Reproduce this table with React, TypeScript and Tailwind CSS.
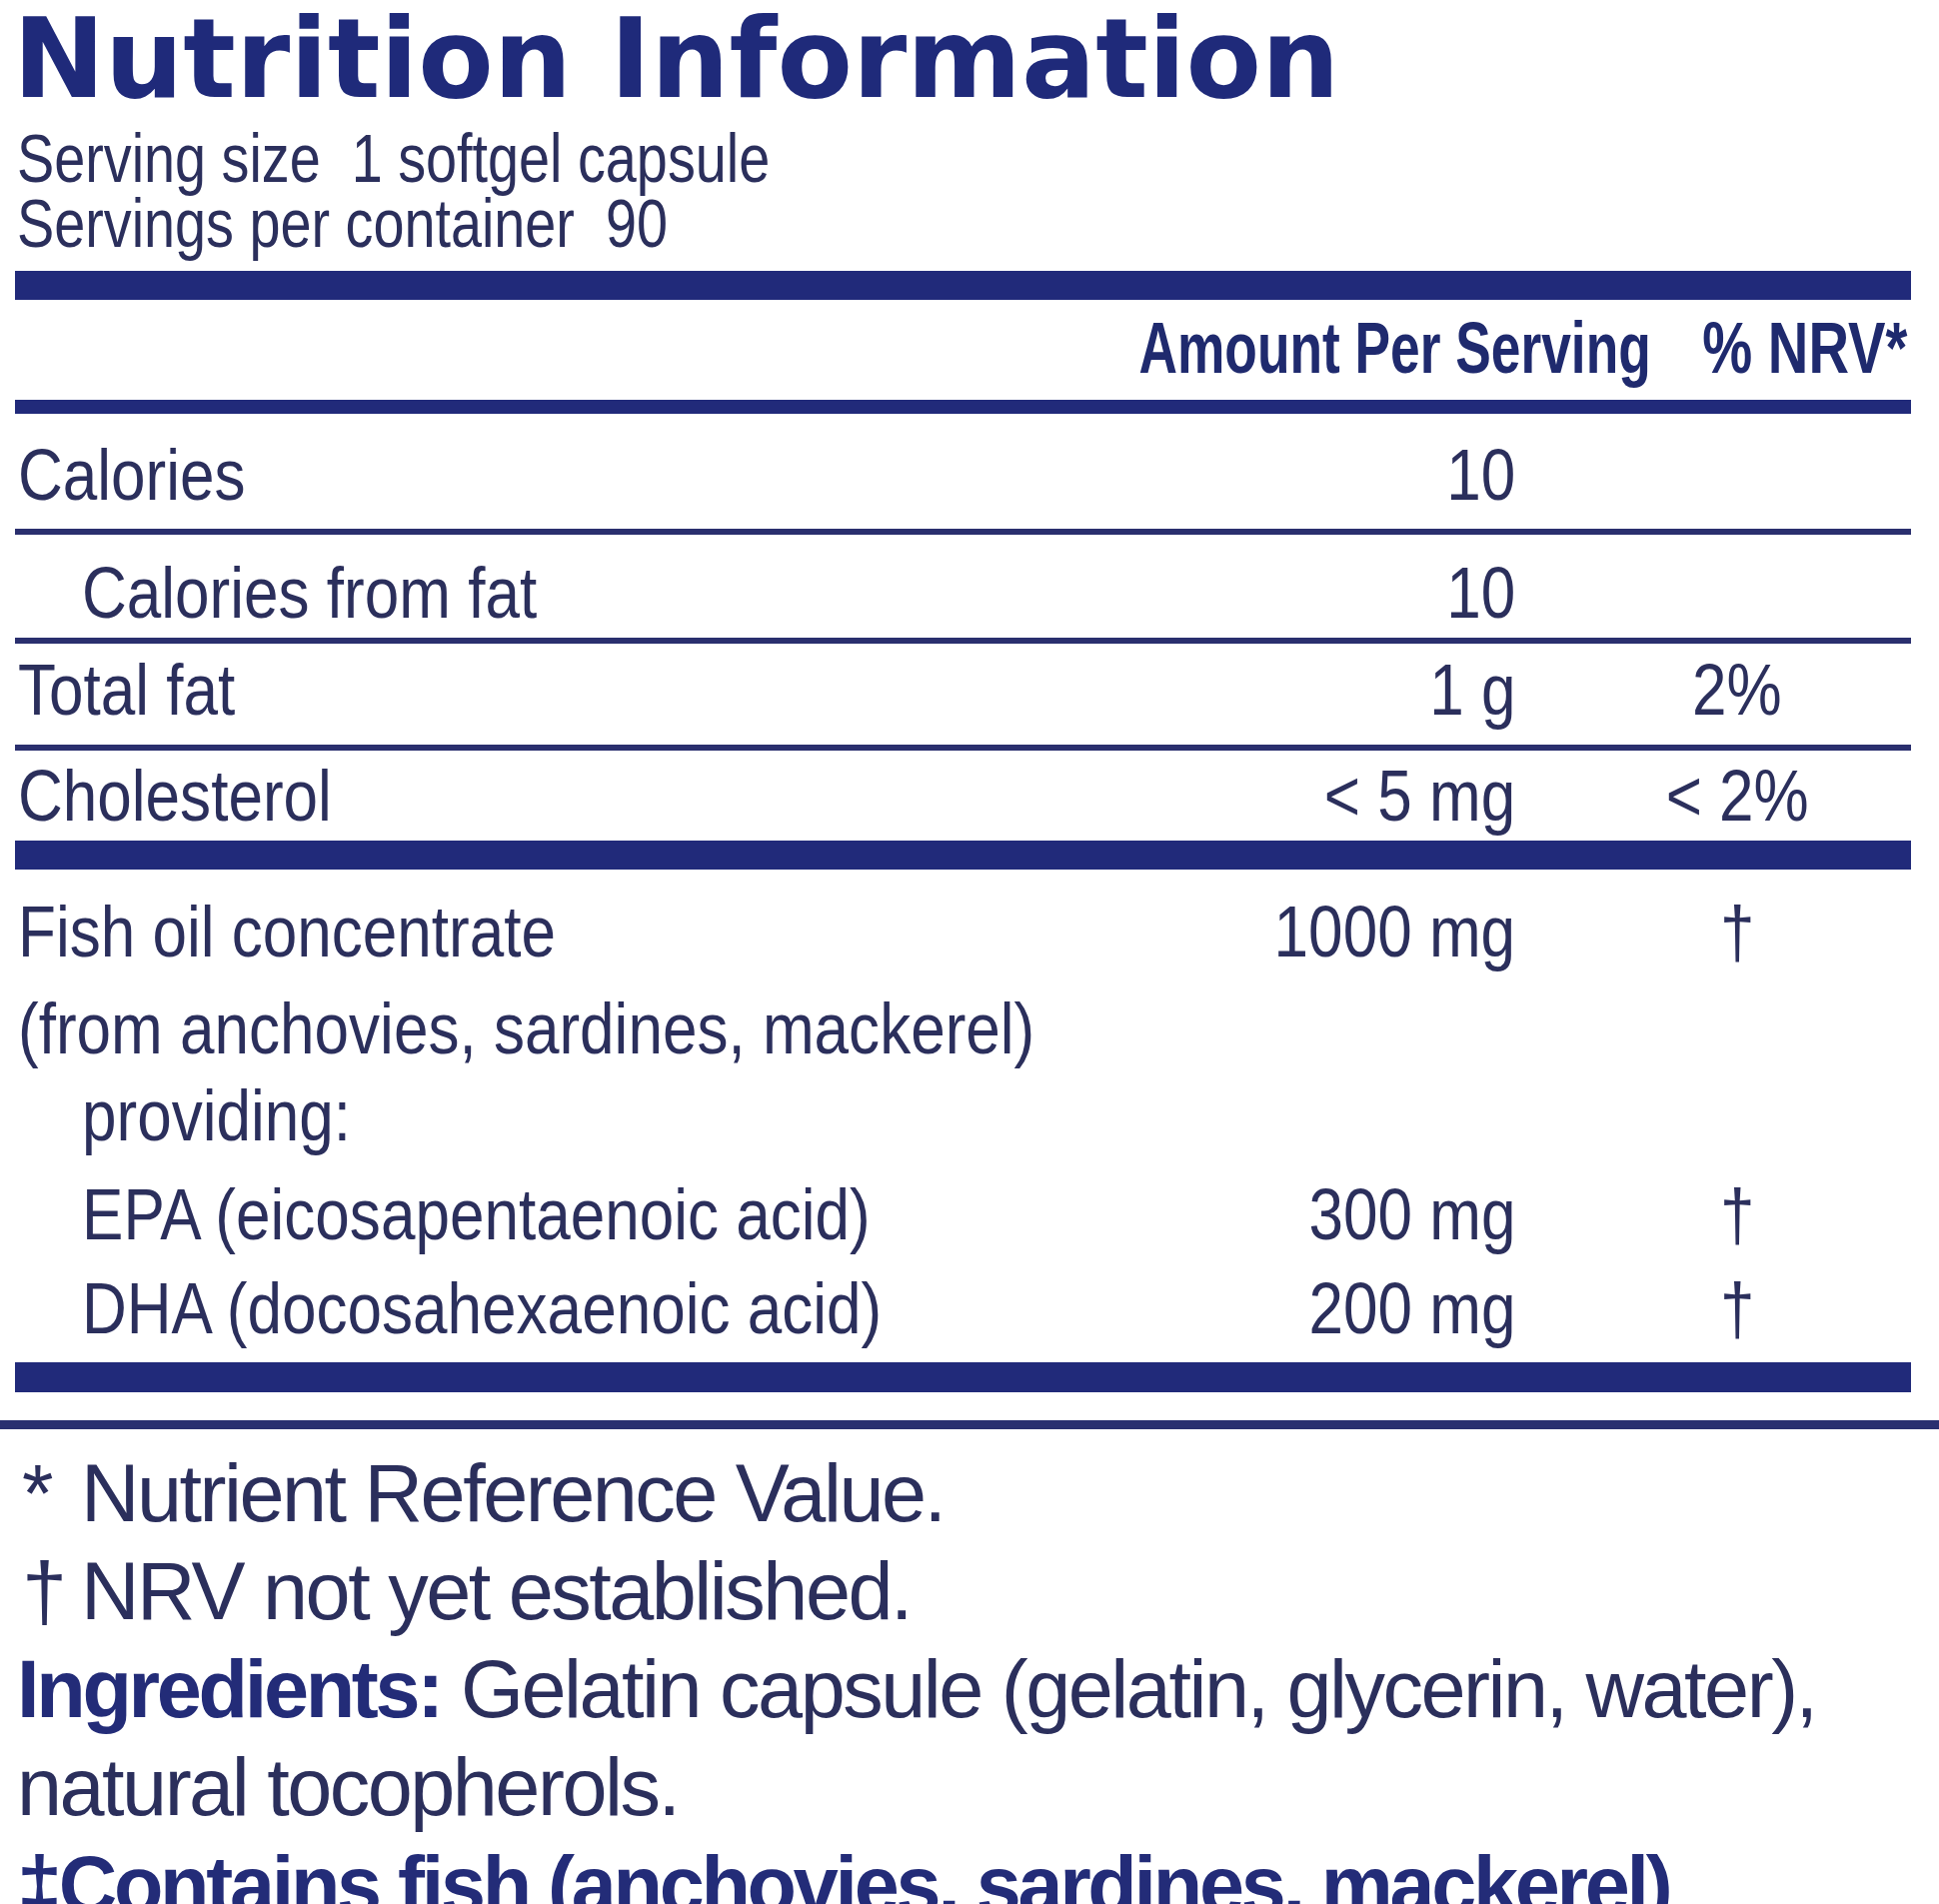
const bar = "bg-[#212a7a]"

const rows = [
  { label: "Calories", amount: "10", nrv: "", indent: false, box: "h-[115px] pt-[24px]" },
  { label: "Calories from fat", amount: "10", nrv: "", indent: true, box: "h-[103px] pt-[21px]" },
  { label: "Total fat", amount: "1 g", nrv: "2%", indent: false, box: "h-[101px] pt-[9px]" },
  { label: "Cholesterol", amount: "< 5 mg", nrv: "< 2%", indent: false, box: "h-[90px] pt-[8px]" },
]

const fishRows = [
  { label: "Fish oil concentrate", amount: "1000 mg", nrv: "†", indent: false, box: "h-[97px]" },
  { label: "(from anchovies, sardines, mackerel)", amount: "", nrv: "", indent: false, box: "h-[87px]" },
  { label: "providing:", amount: "", nrv: "", indent: true, box: "h-[99px]" },
  { label: "EPA (eicosapentaenoic acid)", amount: "300 mg", nrv: "†", indent: true, box: "h-[94px]" },
  { label: "DHA (docosahexaenoic acid)", amount: "200 mg", nrv: "†", indent: true, box: "h-[91px]" },
]

function Row({ label, amount, nrv, indent, box }: { label: string; amount: string; nrv: string; indent: boolean; box: string }) {
  return (
    <div className={`flex items-start leading-[74px] ${box}`}>
      <div className={`flex-1 min-w-0 whitespace-nowrap ${indent ? "pl-[67px]" : "pl-[3px]"}`}>
        <span className="inline-block origin-left scale-x-[0.85]">{label}</span>
      </div>
      <div className="w-[400px] text-right whitespace-nowrap">
        <span className="inline-block origin-right scale-x-[0.85]">{amount}</span>
      </div>
      <div className="ml-[72px] mr-[24px] w-[300px] text-center whitespace-nowrap">
        <span className="inline-block scale-x-[0.85]">{nrv}</span>
      </div>
    </div>
  )
}

export default function App() {
  return (
    <div className="min-h-screen bg-white text-[#2b2f5c] overflow-hidden">
      <div className="pl-[15px] w-[1912px]">
        <h1 className="pt-[3px] -ml-[2px] font-['DejaVu_Sans',sans-serif] font-bold text-[110px] leading-[112px] text-[#1f2a7a] whitespace-nowrap">
          Nutrition Information
        </h1>

        <div className="mt-[11px] pl-[2px] font-['Liberation_Sans',Arial,sans-serif] text-[68px] leading-[65px] whitespace-nowrap">
          <p>
            <span className="inline-block origin-left scale-x-[0.82]">Serving size&nbsp; 1 softgel capsule</span>
          </p>
          <p>
            <span className="inline-block origin-left scale-x-[0.82]">Servings per container&nbsp; 90</span>
          </p>
        </div>

        <div className={`mt-[15px] h-[29px] ${bar}`} />

        <div className="h-[100px] pt-[11px] flex font-['Liberation_Sans',Arial,sans-serif] font-bold text-[73px] leading-[74px] text-[#1f2a6e] whitespace-nowrap">
          <div className="flex-1 text-right">
            <span className="inline-block origin-right scale-x-[0.73]">Amount Per Serving</span>
          </div>
          <div className="w-[260px] pr-[4px] flex justify-end">
            <span className="inline-block shrink-0 origin-right scale-x-[0.77]">% NRV*</span>
          </div>
        </div>

        <div className={`h-[14px] ${bar}`} />

        <div className="font-['Liberation_Sans',Arial,sans-serif] text-[73px]">
          {rows.map((r, i) => (
            <div key={r.label}>
              <Row {...r} />
              {i < rows.length - 1 && <div className="h-[6px] bg-[#2a2f6e]" />}
            </div>
          ))}
        </div>

        <div className={`h-[29px] ${bar}`} />

        <div className="pt-[25px] font-['Liberation_Sans',Arial,sans-serif] text-[73px]">
          {fishRows.map((r) => (
            <Row key={r.label} {...r} />
          ))}
        </div>

        <div className={`h-[30px] ${bar}`} />
      </div>

      <div className="mt-[28px] h-[9px] bg-[#2a3070]" />

      <div className="mt-[15px] pl-[17px] font-['Liberation_Sans',Arial,sans-serif] text-[81px] leading-[98px] tracking-[-2.5px] whitespace-nowrap">
        <p>
          <span className="inline-block w-[64px] pl-[5px]">*</span>Nutrient Reference Value.
        </p>
        <p>
          <span className="inline-block w-[64px] pl-[5px]">†</span>NRV not yet established.
        </p>
        <p>
          <span className="font-bold tracking-[-3.3px] text-[#232c78]">Ingredients:</span> Gelatin capsule (gelatin, glycerin, water),
          <br />
          natural tocopherols.
        </p>
        <p className="font-bold tracking-[-3.3px] text-[#232c78]">‡Contains fish (anchovies, sardines, mackerel)</p>
      </div>
    </div>
  )
}
